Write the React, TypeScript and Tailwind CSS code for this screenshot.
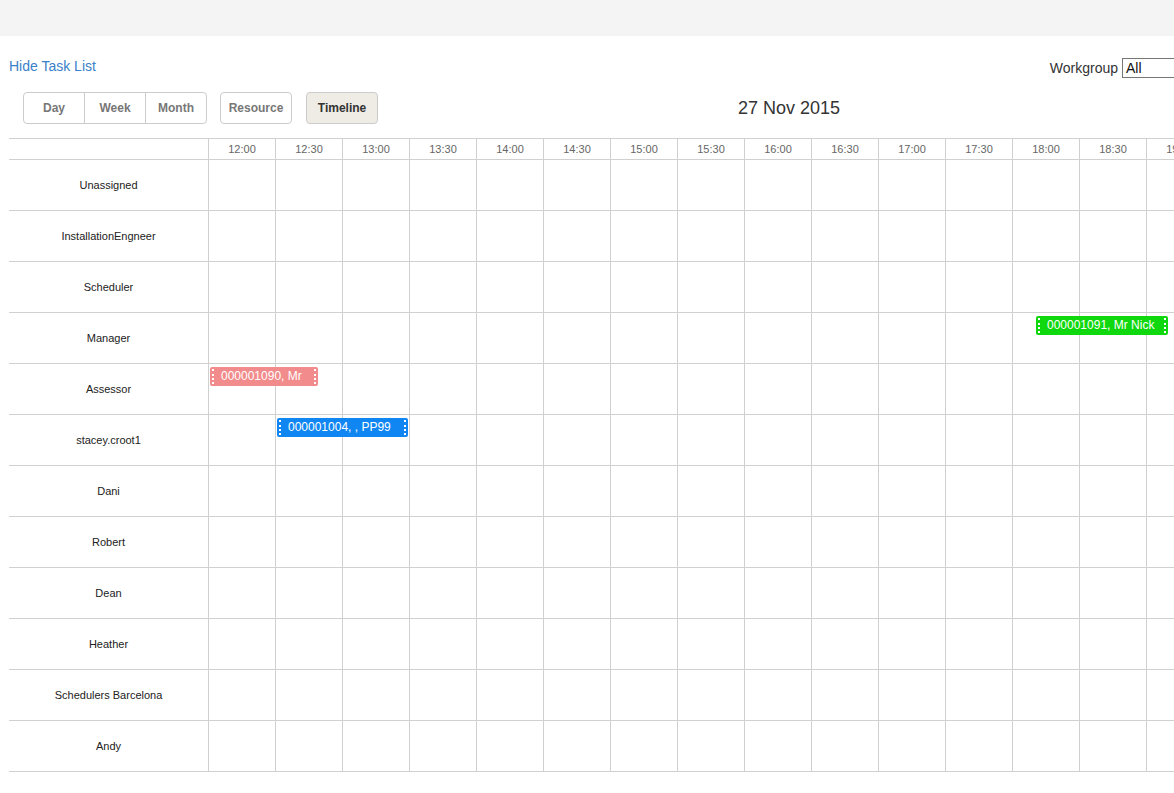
const times = [
  "12:00", "12:30", "13:00", "13:30", "14:00", "14:30", "15:00", "15:30",
  "16:00", "16:30", "17:00", "17:30", "18:00", "18:30", "19:00",
];

type Ev = { left: number; width: number; text: string; color: string };

const rows: { name: string; events?: Ev[] }[] = [
  { name: "Unassigned" },
  { name: "InstallationEngneer" },
  { name: "Scheduler" },
  { name: "Manager", events: [{ left: 827, width: 132, text: "000001091, Mr Nick", color: "bg-[#0fd80f]" }] },
  { name: "Assessor", events: [{ left: 1, width: 108, text: "000001090, Mr", color: "bg-[#f28b8b]" }] },
  { name: "stacey.croot1", events: [{ left: 68, width: 131, text: "000001004, , PP99", color: "bg-[#0f86f2]" }] },
  { name: "Dani" },
  { name: "Robert" },
  { name: "Dean" },
  { name: "Heather" },
  { name: "Schedulers Barcelona" },
  { name: "Andy" },
];

function Event({ ev }: { ev: Ev }) {
  return (
    <div
      className={`absolute top-[3px] h-[19px] rounded-[2px] ${ev.color} text-white text-[12px] leading-[19px] pl-[11px] whitespace-nowrap overflow-hidden`}
      style={{ left: ev.left, width: ev.width }}
    >
      <span className="absolute left-[2px] top-[2px] bottom-[2px] border-l-2 border-dotted border-white" />
      {ev.text}
      <span className="absolute right-[2px] top-[2px] bottom-[2px] border-l-2 border-dotted border-white" />
    </div>
  );
}

export default function App() {
  return (
    <div className="w-[1174px] h-[793px] overflow-hidden bg-white font-['Liberation_Sans',Arial,sans-serif]">
      <div className="h-[36px] bg-[#f4f4f4]" />
      <div className="flex items-start justify-between pl-[9px] pt-[22px] h-[52px]">
        <a className="text-[14px] leading-[16px] text-[#3b80c8] cursor-pointer">Hide Task List</a>
        <div className="flex items-center">
          <span className="text-[14px] leading-[16px] text-[#333] mr-[4px]">Workgroup</span>
          <div className="w-[52px] h-[20px] border border-[#767676] border-r-0 text-[14px] leading-[18px] pl-[3px] text-[#111]">
            All
          </div>
        </div>
      </div>
      <div className="flex items-start pl-[23px] pt-[4px] h-[50px]">
        <div className="flex h-[32px] border border-[#cccccc] rounded-[4px] text-[12px] font-bold text-[#777]">
          <div className="w-[61px] flex items-center justify-center border-r border-[#cccccc]">Day</div>
          <div className="w-[61px] flex items-center justify-center border-r border-[#cccccc]">Week</div>
          <div className="w-[60px] flex items-center justify-center">Month</div>
        </div>
        <div className="ml-[13px] w-[72px] h-[32px] flex items-center justify-center border border-[#cccccc] rounded-[4px] text-[12px] font-bold text-[#777]">
          Resource
        </div>
        <div className="ml-[14px] w-[72px] h-[32px] flex items-center justify-center border border-[#cccccc] rounded-[4px] bg-[#efece6] text-[12px] font-bold text-[#333]">
          Timeline
        </div>
        <div className="ml-[360px] h-[32px] flex items-center text-[18px] text-[#333]">27 Nov 2015</div>
      </div>
      <div className="ml-[9px] w-[1300px] border-t border-[#d0d0d0]">
        <div className="flex h-[21px] border-b border-[#d0d0d0]">
          <div className="w-[200px] shrink-0 border-r border-[#d0d0d0]" />
          {times.map((t) => (
            <div
              key={t}
              className="w-[67px] shrink-0 border-r border-[#d0d0d0] text-[11px] text-[#666] flex items-center justify-center"
            >
              {t}
            </div>
          ))}
        </div>
        {rows.map((r) => (
          <div key={r.name} className="flex h-[51px] border-b border-[#d0d0d0]">
            <div className="w-[200px] shrink-0 border-r border-[#d0d0d0] flex items-center justify-center text-[11px] text-[#222]">
              {r.name}
            </div>
            <div className="relative flex">
              {times.map((t) => (
                <div key={t} className="w-[67px] shrink-0 border-r border-[#d0d0d0]" />
              ))}
              {r.events?.map((ev) => <Event key={ev.text} ev={ev} />)}
            </div>
          </div>
        ))}
      </div>
    </div>
  );
}
